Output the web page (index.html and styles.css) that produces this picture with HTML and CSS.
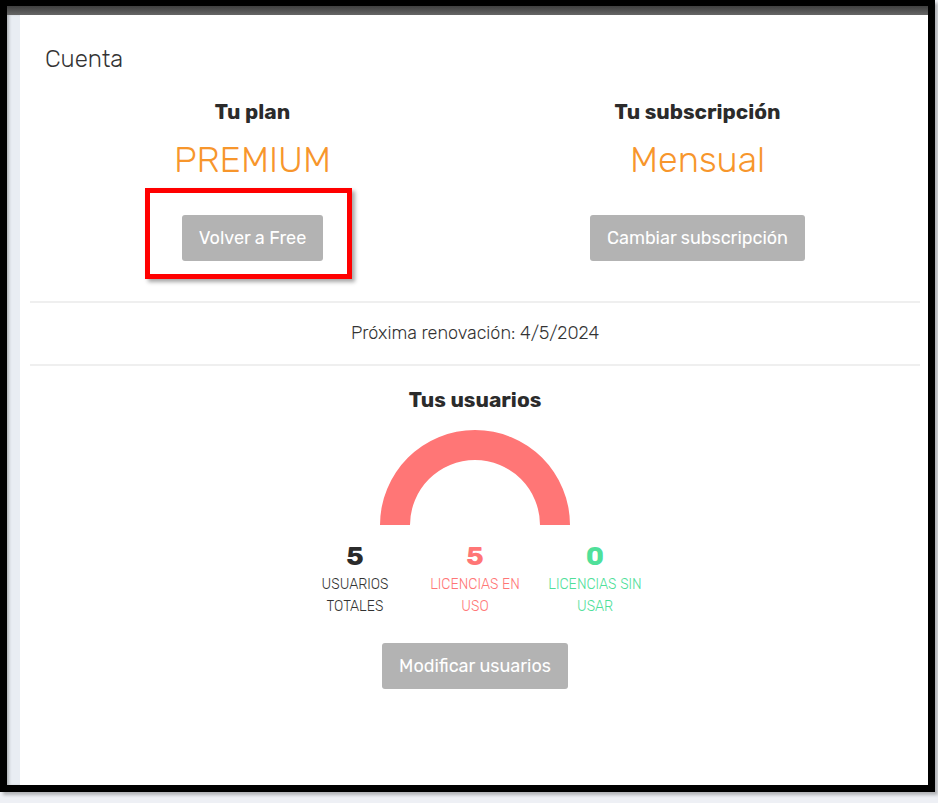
FILE: index.html
```html
<!DOCTYPE html>
<html lang="es">
<head>
<meta charset="utf-8">
<title>Cuenta</title>
<link rel="stylesheet" href="styles.css">
</head>
<body>
<div class="frame">
  <div class="topbar"></div>
  <div class="page">
    <div class="card">
      <h1 class="title">Cuenta</h1>
      <div class="plans">
        <div class="plan">
          <h2 class="plan-label">Tu plan</h2>
          <div class="plan-value">PREMIUM</div>
          <div class="highlight">
            <button class="btn">Volver a Free</button>
          </div>
        </div>
        <div class="plan">
          <h2 class="plan-label">Tu subscripción</h2>
          <div class="plan-value">Mensual</div>
          <div class="btn-wrap">
            <button class="btn">Cambiar subscripción</button>
          </div>
        </div>
      </div>
      <div class="renewal">Próxima renovación: 4/5/2024</div>
      <div class="users">
        <h2 class="plan-label">Tus usuarios</h2>
        <svg class="gauge" width="190" height="95" viewBox="0 0 190 95">
          <path d="M0 95 A95 95 0 0 1 190 95 L160 95 A65 65 0 0 0 30 95 Z" fill="#ff7676"/>
        </svg>
        <div class="stats">
          <div class="stat">
            <div class="stat-num">5</div>
            <div class="stat-label">USUARIOS TOTALES</div>
          </div>
          <div class="stat used">
            <div class="stat-num">5</div>
            <div class="stat-label">LICENCIAS EN USO</div>
          </div>
          <div class="stat free">
            <div class="stat-num">0</div>
            <div class="stat-label">LICENCIAS SIN USAR</div>
          </div>
        </div>
        <button class="btn">Modificar usuarios</button>
      </div>
    </div>
  </div>
</div>
</body>
</html>
```
FILE: styles.css
```css
* { box-sizing: border-box; }
html, body { margin: 0; padding: 0; }
body {
  background: #eef0f5;
  width: 938px;
  height: 803px;
  overflow: hidden;
  font-family: Rubik, Inter, "Noto Sans", Arial, sans-serif;
  color: #2e2e2e;
}
.frame {
  width: 935px;
  height: 792px;
  border: 7px solid #000;
  border-top-width: 6px;
  box-shadow: 3px 3px 3px rgba(0,0,0,0.25);
  display: flex;
  flex-direction: column;
  background: #fff;
}
.topbar {
  height: 9px;
  flex: none;
  background: linear-gradient(#3f3f3f, #666);
}
.page {
  flex: 1;
  background: #e9edf3;
  padding-left: 13px;
  display: flex;
  box-shadow: inset 3px 0 3px -1px rgba(0,0,0,0.25);
}
.card {
  flex: 1;
  background: #fff;
  padding: 0 8px 0 10px;
}
.title {
  margin: 0;
  padding: 30px 0 0 15px;
  font-size: 24px;
  line-height: 28px;
  font-weight: 300;
  color: #333;
}
.plans {
  display: flex;
  padding-top: 26px;
  padding-bottom: 22px;
  border-bottom: 2px solid #efefef;
}
.plan {
  flex: 1;
  display: flex;
  flex-direction: column;
  align-items: center;
}
.plan-label {
  margin: 0;
  font-size: 21px;
  line-height: 26px;
  font-weight: 700;
  color: #2b2b2b;
}
.plan-value {
  margin-top: 15px;
  font-size: 36px;
  line-height: 40px;
  font-weight: 300;
  color: #f7962c;
}
.highlight {
  margin-top: 8px;
  margin-right: 8px;
  width: 207px;
  height: 91px;
  border: 5px solid #f00;
  box-shadow: 3px 3px 4px rgba(0,0,0,0.35);
  display: flex;
  align-items: flex-start;
  justify-content: center;
  padding: 22px 0 0 8px;
}
.btn-wrap {
  margin-top: 8px;
  height: 91px;
  padding-top: 27px;
}
.btn {
  border: none;
  border-radius: 3px;
  background: #b3b3b3;
  color: #fff;
  font-family: inherit;
  font-size: 18px;
  line-height: 22px;
  padding: 12px 17px;
  cursor: pointer;
}
.renewal {
  text-align: center;
  font-size: 18px;
  line-height: 22px;
  font-weight: 300;
  color: #333;
  padding: 19px 0 20px;
  border-bottom: 2px solid #efefef;
}
.users {
  display: flex;
  flex-direction: column;
  align-items: center;
  padding-top: 21px;
}
.gauge {
  display: block;
  margin-top: 17px;
}
.stats {
  display: grid;
  grid-template-columns: repeat(3, 120px);
  margin-top: 16px;
  margin-bottom: 25px;
  text-align: center;
}
.stat {
  padding: 0 8px;
}
.stat-num {
  font-size: 27px;
  line-height: 30px;
  font-weight: 700;
  color: #2b2b2b;
  margin-bottom: 3px;
}
.stat-label {
  font-size: 14px;
  line-height: 22px;
  color: #333;
  font-weight: 300;
}
.used .stat-num, .used .stat-label { color: #ff7676; }
.free .stat-num, .free .stat-label { color: #4fe09a; }
```
